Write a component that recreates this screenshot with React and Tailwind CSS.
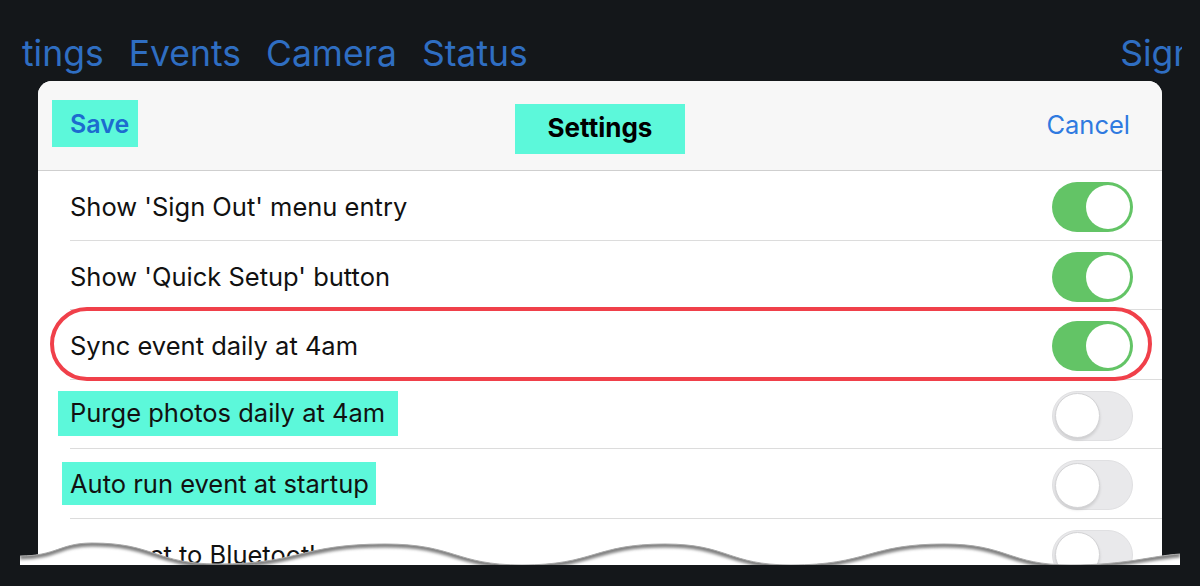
import React from "react";

const rows = [
  { label: "Show 'Sign Out' menu entry", on: true },
  { label: "Show 'Quick Setup' button", on: true },
  { label: "Sync event daily at 4am", on: true, circled: true },
  { label: "Purge photos daily at 4am", on: false, mark: "pl-[12px] pr-[13px] -ml-[12px] pt-[3px] pb-[4px] -mt-[5px]" },
  { label: "Auto run event at startup", on: false, mark: "pl-[8px] pr-[7px] -ml-[8px] pt-[3px] pb-[2px] -mt-[3px]" },
  { label: "Connect to Bluetooth", on: false },
];

function Toggle({ on }) {
  if (on) {
    return (
      <div className="w-[81px] h-[50px] rounded-full bg-[#63c466] flex items-center justify-end p-[3px]">
        <div className="w-[44px] h-[44px] rounded-full bg-white" />
      </div>
    );
  }
  return (
    <div className="w-[81px] h-[50px] rounded-full bg-[#e9e9eb] border-[1.5px] border-[#e0e0e2] flex items-center p-[1.5px]">
      <div className="w-[45px] h-[45px] rounded-full bg-white border border-[#d4d4d6] shadow-[0_2px_3px_rgba(0,0,0,0.12)]" />
    </div>
  );
}

function TornEdge() {
  const wave =
    "M20,26 C56,26 60,13 92,13 C155,13 155,34 218,34 C300,34 300,14 385,14 C455,14 455,35 522,35 C594,35 594,14 665,14 C728,14 728,35 791,35 C868,35 868,14 944,14 C1008,14 1008,35 1071,35 C1126,35 1150,26 1180,24";
  return (
    <svg className="absolute left-0 top-[530px]" width="1200" height="56" viewBox="0 0 1200 56">
      <defs>
        <clipPath id="strip">
          <path d={wave + " L1180,35 L20,35 Z"} />
        </clipPath>
        <filter id="blur" x="-5%" y="-50%" width="110%" height="200%">
          <feGaussianBlur stdDeviation="1.8" />
        </filter>
      </defs>
      <path d={wave + " L1180,35 L20,35 Z"} fill="#ffffff" />
      <g clipPath="url(#strip)">
        <path d={wave} fill="none" stroke="#808080" strokeWidth="7" filter="url(#blur)" />
      </g>
      <path d={wave} fill="none" stroke="#a8a8a8" strokeWidth="1" />
      <rect x="0" y="35" width="1200" height="21" fill="#14171a" />
    </svg>
  );
}

export default function App() {
  return (
    <div
      className="relative w-[1200px] h-[586px] overflow-hidden bg-[#14171a]"
      style={{ fontFamily: "Inter, 'Noto Sans', sans-serif" }}
    >
      <nav className="w-[1182px] h-[81px] overflow-hidden flex items-start pt-[33px] pl-[22px] text-[35.5px] leading-[42px] text-[#2f6ec2] whitespace-nowrap">
        <span>tings</span>
        <span className="ml-[25px]">Events</span>
        <span className="ml-[25px]">Camera</span>
        <span className="ml-[25px]">Status</span>
        <span className="ml-auto -mr-[82px]">Sign Out</span>
      </nav>

      <div className="mx-[38px] rounded-t-[14px] bg-white overflow-hidden h-[505px]">
        <div className="h-[90px] bg-[#f7f7f7] border-b border-[#cfcfcf] grid grid-cols-[1fr_auto_1fr] items-center px-[14px]">
          <div>
            <button className="bg-[#5cf8da] w-[86px] h-[47px] -mt-[4px] pl-[18px] pt-[3px] text-left text-[25px] font-semibold text-[#1c6bcf]">
              Save
            </button>
          </div>
          <div className="bg-[#5cf8da] w-[170px] h-[50px] mt-[6px] pb-[3px] flex items-center justify-center text-[26px] font-bold text-black">
            Settings
          </div>
          <div className="text-right pr-[18px] text-[25.5px] text-[#2f7ae0]">Cancel</div>
        </div>

        {rows.map((row) => (
          <div key={row.label} className="relative h-[69.5px] pl-[32px] flex">
            <div className="flex-1 h-full border-b border-[#dcdcdc] flex items-center justify-between pt-[4px] pr-[29px]">
              <span className={"text-[25.5px] text-[#111111] " + (row.mark ? "bg-[#5cf8da] " + row.mark : "")}>
                {row.label}
              </span>
              <Toggle on={row.on} />
            </div>
            {row.circled && (
              <div className="absolute left-[12px] right-[10px] -top-[3px] h-[74px] rounded-full border-[4px] border-[#f0404a]" />
            )}
          </div>
        ))}
      </div>

      <TornEdge />
    </div>
  );
}
